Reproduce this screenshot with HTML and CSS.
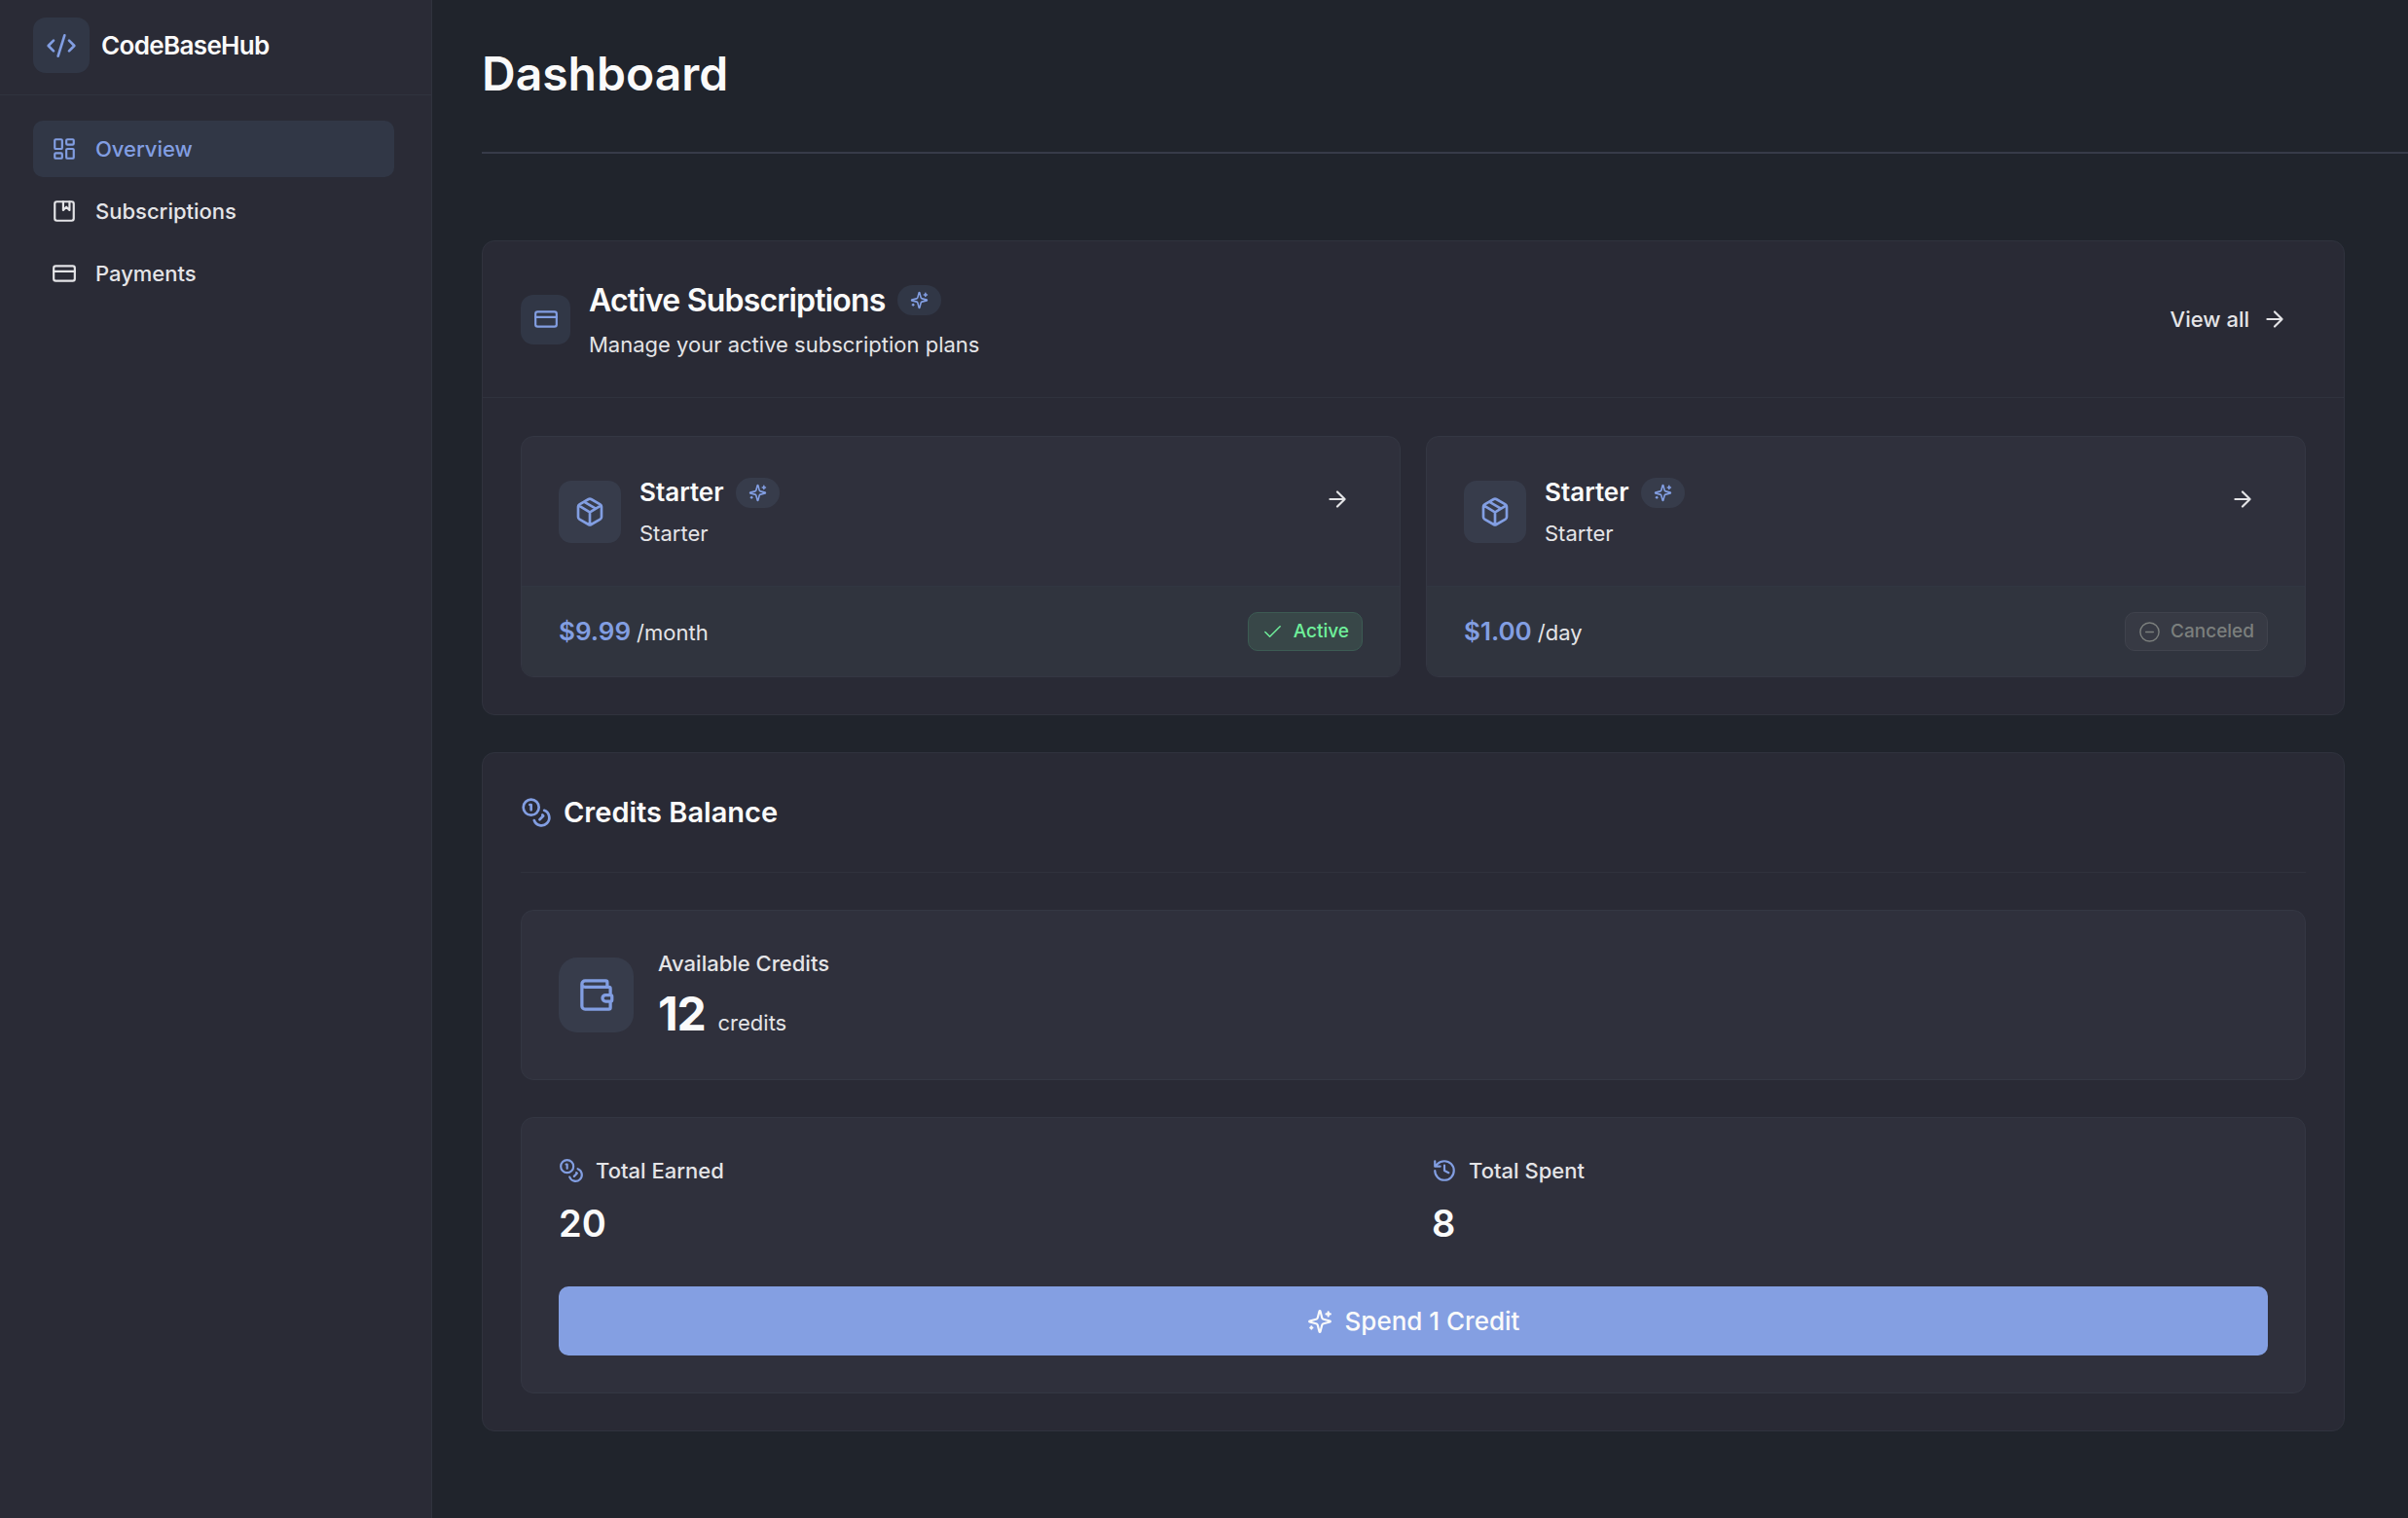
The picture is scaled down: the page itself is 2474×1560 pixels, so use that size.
FILE: index.html
```html
<!DOCTYPE html>
<html lang="en">
<head>
    <meta charset="UTF-8">
    <meta name="viewport" content="width=device-width, initial-scale=1.0">
    <title>Dashboard - CodeBaseHub</title>
    <link rel="stylesheet" href="styles.css">
</head>
<body>
    <!-- Icons shared by the whole page -->
    <svg class="sprite" aria-hidden="true">
        <symbol id="code" viewBox="0 0 24 24"><path d="m18 16 4-4-4-4M6 8l-4 4 4 4M14.5 4l-5 16"/></symbol>
        <symbol id="dashboard" viewBox="0 0 24 24"><rect x="3" y="3" width="7" height="9" rx="1"/><rect x="14" y="3" width="7" height="5" rx="1"/><rect x="14" y="12" width="7" height="9" rx="1"/><rect x="3" y="16" width="7" height="5" rx="1"/></symbol>
        <symbol id="album" viewBox="0 0 24 24"><rect x="3" y="3" width="18" height="18" rx="2"/><path d="M11 3v8l3-3 3 3V3"/></symbol>
        <symbol id="card" viewBox="0 0 24 24"><rect x="2" y="5" width="20" height="14" rx="2"/><path d="M2 10h20"/></symbol>
        <symbol id="sparkles" viewBox="0 0 24 24"><path d="M9.937 15.5A2 2 0 0 0 8.5 14.063l-6.135-1.582a.5.5 0 0 1 0-.962L8.5 9.936A2 2 0 0 0 9.937 8.5l1.582-6.135a.5.5 0 0 1 .963 0L14.063 8.5A2 2 0 0 0 15.5 9.937l6.135 1.581a.5.5 0 0 1 0 .964L15.5 14.063a2 2 0 0 0-1.437 1.437l-1.582 6.135a.5.5 0 0 1-.963 0zM20 3v4M22 5h-4M4 17v2M5 18H3"/></symbol>
        <symbol id="arrow" viewBox="0 0 24 24"><path d="M5 12h14M12 5l7 7-7 7"/></symbol>
        <symbol id="package" viewBox="0 0 24 24"><path d="M11 21.73a2 2 0 0 0 2 0l7-4A2 2 0 0 0 21 16V8a2 2 0 0 0-1-1.73l-7-4a2 2 0 0 0-2 0l-7 4A2 2 0 0 0 3 8v8a2 2 0 0 0 1 1.73zM12 22V12M3.3 7l7.703 4.734a2 2 0 0 0 1.994 0L20.7 7M7.5 4.27l9 5.15"/></symbol>
        <symbol id="check" viewBox="0 0 24 24"><path d="M20 6 9 17l-5-5"/></symbol>
        <symbol id="minus" viewBox="0 0 24 24"><circle cx="12" cy="12" r="10"/><path d="M8 12h8"/></symbol>
        <symbol id="coins" viewBox="0 0 24 24"><circle cx="8" cy="8" r="6"/><path d="M18.09 10.37A6 6 0 1 1 10.34 18M7 6h1v4M16.71 13.88l.7.71-2.82 2.82"/></symbol>
        <symbol id="wallet" viewBox="0 0 24 24"><path d="M19 7V4a1 1 0 0 0-1-1H5a2 2 0 0 0 0 4h15a1 1 0 0 1 1 1v4h-3a2 2 0 0 0 0 4h3a1 1 0 0 0 1-1v-2a1 1 0 0 0-1-1M3 5v14a2 2 0 0 0 2 2h15a1 1 0 0 0 1-1v-4"/></symbol>
        <symbol id="history" viewBox="0 0 24 24"><path d="M3 12a9 9 0 1 0 9-9 9.75 9.75 0 0 0-6.74 2.74L3 8M3 3v5h5M12 7v5l4 2"/></symbol>
    </svg>

    <div class="layout">
        <aside class="sidebar">
            <div class="brand">
                <span class="brand-icon"><svg class="icon icon-lg"><use href="#code"/></svg></span>
                <span class="brand-name">CodeBaseHub</span>
            </div>
            <nav class="menu">
                <a class="menu-item active" href="#"><svg class="icon icon-md text-icon"><use href="#dashboard"/></svg>Overview</a>
                <a class="menu-item" href="#"><svg class="icon icon-md text-icon"><use href="#album"/></svg>Subscriptions</a>
                <a class="menu-item" href="#"><svg class="icon icon-md text-icon"><use href="#card"/></svg>Payments</a>
            </nav>
        </aside>

        <main class="main">
            <header class="page-header">
                <h1>Dashboard</h1>
            </header>

            <div class="content">
                <section class="panel">
                    <div class="panel-header">
                        <span class="header-icon"><svg class="icon icon-md"><use href="#card"/></svg></span>
                        <div class="header-text">
                            <div class="title-row">
                                <h2>Active Subscriptions</h2>
                                <span class="pill"><svg class="icon icon-sm"><use href="#sparkles"/></svg></span>
                            </div>
                            <p>Manage your active subscription plans</p>
                        </div>
                        <a class="view-all" href="#">View all<svg class="icon icon-md text-icon"><use href="#arrow"/></svg></a>
                    </div>

                    <div class="plans">
                        <article class="plan">
                            <div class="plan-top">
                                <span class="plan-icon"><svg class="icon icon-lg"><use href="#package"/></svg></span>
                                <div class="plan-text">
                                    <div class="title-row">
                                        <h3>Starter</h3>
                                        <span class="pill"><svg class="icon icon-sm"><use href="#sparkles"/></svg></span>
                                    </div>
                                    <p>Starter</p>
                                </div>
                                <button class="plan-open" type="button" aria-label="Open plan"><svg class="icon icon-md text-icon"><use href="#arrow"/></svg></button>
                            </div>
                            <div class="plan-bottom">
                                <div class="price"><strong>$9.99</strong><span>/month</span></div>
                                <span class="status status-active"><svg class="icon icon-status"><use href="#check"/></svg>Active</span>
                            </div>
                        </article>

                        <article class="plan">
                            <div class="plan-top">
                                <span class="plan-icon"><svg class="icon icon-lg"><use href="#package"/></svg></span>
                                <div class="plan-text">
                                    <div class="title-row">
                                        <h3>Starter</h3>
                                        <span class="pill"><svg class="icon icon-sm"><use href="#sparkles"/></svg></span>
                                    </div>
                                    <p>Starter</p>
                                </div>
                                <button class="plan-open" type="button" aria-label="Open plan"><svg class="icon icon-md text-icon"><use href="#arrow"/></svg></button>
                            </div>
                            <div class="plan-bottom">
                                <div class="price"><strong>$1.00</strong><span>/day</span></div>
                                <span class="status status-canceled"><svg class="icon icon-status"><use href="#minus"/></svg>Canceled</span>
                            </div>
                        </article>
                    </div>
                </section>

                <section class="panel credits">
                    <div class="credits-header">
                        <svg class="icon icon-lg"><use href="#coins"/></svg>
                        <h2>Credits Balance</h2>
                    </div>

                    <div class="box balance">
                        <span class="wallet-icon"><svg class="icon icon-xl"><use href="#wallet"/></svg></span>
                        <div>
                            <p class="label">Available Credits</p>
                            <p class="balance-value"><strong>12</strong><span>credits</span></p>
                        </div>
                    </div>

                    <div class="box">
                        <div class="stats">
                            <div>
                                <p class="label"><svg class="icon icon-md"><use href="#coins"/></svg>Total Earned</p>
                                <p class="stat-value">20</p>
                            </div>
                            <div>
                                <p class="label"><svg class="icon icon-md"><use href="#history"/></svg>Total Spent</p>
                                <p class="stat-value">8</p>
                            </div>
                        </div>
                        <button class="spend" type="button"><svg class="icon icon-md text-icon"><use href="#sparkles"/></svg>Spend 1 Credit</button>
                    </div>
                </section>
            </div>
        </main>
    </div>
</body>
</html>
```
FILE: styles.css
```css
* {
    box-sizing: border-box;
    margin: 0;
}
body {
    font-family: Inter, sans-serif;
    font-size: 22px;
    line-height: 32px;
    background-color: #20242c;
    color: #e4e4e7;
}
a {
    color: inherit;
    text-decoration: none;
}
button {
    font: inherit;
    color: inherit;
    border: none;
    cursor: pointer;
}
h1, h2, h3, strong {
    color: #fafafa;
    font-weight: 600;
}

/* Icons */
.sprite {
    display: none;
}
.icon {
    flex-shrink: 0;
    fill: none;
    stroke: #829ee2;
    stroke-width: 2;
    stroke-linecap: round;
    stroke-linejoin: round;
}
.text-icon {
    stroke: currentColor;
}
.icon-sm {
    width: 19px;
    height: 19px;
}
.icon-status {
    width: 23px;
    height: 23px;
    stroke: currentColor;
    stroke-width: 1.5;
}
.icon-md {
    width: 26px;
    height: 26px;
}
.icon-lg {
    width: 32px;
    height: 32px;
}
.icon-xl {
    width: 39px;
    height: 39px;
}

.layout {
    display: flex;
    min-height: 100vh;
}

/* Sidebar */
.sidebar {
    flex: 0 0 444px;
    background-color: #2a2b36;
    border-right: 1px solid #30333e;
}
.brand {
    display: flex;
    align-items: center;
    gap: 12px;
    padding: 18px 34px 22px;
    border-bottom: 1px solid #30333e;
}
.brand-icon {
    display: flex;
    align-items: center;
    justify-content: center;
    width: 58px;
    height: 57px;
    border-radius: 13px;
    background-color: #313746;
}
.brand-name {
    font-size: 26px;
    font-weight: 600;
    letter-spacing: -0.025em;
    color: #fafafa;
}
.menu {
    display: flex;
    flex-direction: column;
    gap: 6px;
    padding: 26px 38px 26px 34px;
}
.menu-item {
    display: flex;
    align-items: center;
    gap: 19px;
    padding: 13px 19px;
    border-radius: 10px;
    font-weight: 500;
}
.menu-item.active {
    background-color: #313746;
    color: #829ee2;
}

/* Main column */
.main {
    flex: 1;
    min-width: 0;
    padding-left: 51px;
}
.page-header {
    padding: 45px 0 49px;
    border-bottom: 2px solid #373b49;
}
h1 {
    font-size: 48px;
    line-height: 62px;
}
.content {
    display: flex;
    flex-direction: column;
    gap: 38px;
    padding: 89px 65px 89px 0;
}
.panel {
    border: 1px solid #30333e;
    border-radius: 13px;
    background-color: #292a35;
}
.panel-header {
    display: flex;
    align-items: center;
    gap: 19px;
    padding: 38px 39px;
    border-bottom: 1px solid #2f323d;
}
.header-icon {
    display: flex;
    align-items: center;
    justify-content: center;
    width: 51px;
    height: 51px;
    border-radius: 13px;
    background-color: #313746;
}
.header-text {
    flex: 1;
}
.title-row {
    display: flex;
    align-items: center;
    gap: 12px;
    margin-bottom: 7px;
}
h2 {
    font-size: 32px;
    line-height: 45px;
    letter-spacing: -0.025em;
}
.pill {
    display: flex;
    padding: 6px 13px;
    border-radius: 16px;
    background-color: #313746;
}
.view-all {
    display: flex;
    align-items: center;
    gap: 13px;
    padding: 0 19px;
    font-weight: 500;
}

/* Plan cards */
.plans {
    display: grid;
    grid-template-columns: 1fr 1fr;
    gap: 26px;
    padding: 39px 39px 38px;
}
.plan {
    border: 1px solid #343743;
    border-radius: 13px;
    background-color: #2f303c;
    overflow: hidden;
}
.plan-top {
    display: flex;
    align-items: center;
    gap: 19px;
    padding: 38px;
}
.plan-icon {
    display: flex;
    padding: 16px;
    border-radius: 13px;
    background-color: #373c4b;
}
.plan-text {
    flex: 1;
}
h3 {
    font-size: 26px;
    line-height: 38px;
}
.plan .pill {
    background-color: #373c4b;
}
.plan-open {
    align-self: flex-start;
    display: flex;
    padding: 13px;
    background: none;
}
.plan-bottom {
    display: flex;
    align-items: center;
    justify-content: space-between;
    padding: 26px 38px;
    border-top: 1px solid #313641;
    background-color: #30343e;
}
.price {
    display: flex;
    align-items: baseline;
    gap: 6px;
}
.price strong {
    font-size: 26px;
    color: #829ee2;
}
.status {
    display: flex;
    align-items: center;
    gap: 10px;
    padding: 3px 13px;
    border: 1px solid;
    border-radius: 10px;
    font-size: 19px;
    font-weight: 500;
}
.status-active {
    color: #6ff09b;
    background-color: #384748;
    border-color: #3c5b53;
}
.status-canceled {
    color: #7b7f7d;
    background-color: #373a44;
    border-color: #40434d;
}

/* Credits */
.credits {
    display: flex;
    flex-direction: column;
    gap: 38px;
    padding: 38px 39px;
}
.credits-header {
    display: flex;
    align-items: center;
    gap: 12px;
    padding-bottom: 38px;
    border-bottom: 1px solid #2f323d;
}
.credits-header h2 {
    font-size: 29px;
    line-height: 46px;
    letter-spacing: 0;
}
.box {
    padding: 38px;
    border: 1px solid #343743;
    border-radius: 13px;
    background-color: #2f303c;
}
.balance {
    display: flex;
    align-items: center;
    gap: 25px;
}
.wallet-icon {
    display: flex;
    padding: 19px;
    border-radius: 19px;
    background-color: #373c4b;
}
.label {
    display: flex;
    align-items: center;
    gap: 12px;
    font-weight: 500;
}
.balance-value {
    display: flex;
    align-items: baseline;
    gap: 13px;
    margin-top: 7px;
}
.balance-value strong {
    font-size: 48px;
    line-height: 58px;
    font-weight: 700;
    letter-spacing: -0.025em;
}
.stats {
    display: grid;
    grid-template-columns: 1fr 1fr;
    gap: 38px;
    margin-bottom: 39px;
}
.stat-value {
    margin-top: 13px;
    font-size: 38px;
    line-height: 51px;
    font-weight: 600;
    color: #fafafa;
}
.spend {
    display: flex;
    align-items: center;
    justify-content: center;
    gap: 13px;
    width: 100%;
    padding: 19px;
    border-radius: 10px;
    background-color: #849fe2;
    color: #fafafa;
    font-size: 26px;
    line-height: 33px;
    font-weight: 500;
}
```
